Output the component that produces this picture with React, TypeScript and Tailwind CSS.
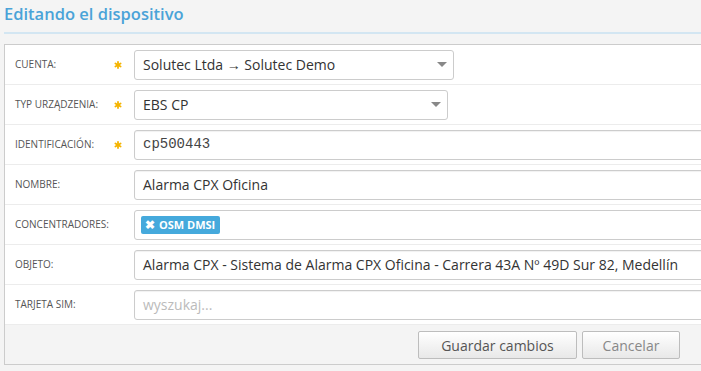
import { Asterisk } from 'lucide-react';

interface Field {
  label: string;
  required?: boolean;
  kind: 'select' | 'text' | 'mono' | 'tags' | 'placeholder';
  value: string;
  width?: string;
}

const fields: Field[] = [
  { label: 'Cuenta:', required: true, kind: 'select', value: 'Solutec Ltda → Solutec Demo', width: 'w-[320px]' },
  { label: 'Typ urządzenia:', required: true, kind: 'select', value: 'EBS CP', width: 'w-[314px]' },
  { label: 'Identificación:', required: true, kind: 'mono', value: 'cp500443' },
  { label: 'Nombre:', kind: 'text', value: 'Alarma CPX Oficina' },
  { label: 'Concentradores:', kind: 'tags', value: 'OSM DMSI' },
  { label: 'Objeto:', kind: 'text', value: 'Alarma CPX - Sistema de Alarma CPX Oficina - Carrera 43A Nº 49D Sur 82, Medellín' },
  { label: 'Tarjeta SIM:', kind: 'placeholder', value: 'wyszukaj...' },
];

function FieldInput({ field }: { field: Field }) {
  if (field.kind === 'select') {
    return (
      <div className={`${field.width} h-[30px] flex items-center justify-between border border-[#ccc] rounded-[3px] bg-white pl-[8px] pr-[6px]`}>
        <span className="text-[14px] text-[#333] whitespace-nowrap">{field.value}</span>
        <span className="w-0 h-0 border-l-[5px] border-r-[5px] border-t-[5px] border-l-transparent border-r-transparent border-t-[#888]" />
      </div>
    );
  }

  if (field.kind === 'tags') {
    return (
      <div className="flex-1 -mr-[6px] h-[30px] flex items-center border border-[#ccc] rounded-[3px] bg-white pl-[6px]">
        <span className="flex items-center gap-[4px] h-[18px] pl-[4px] pr-[5px] rounded-[2px] bg-[#45a9dc] text-white text-[11px] font-bold leading-none">
          <span className="text-[12px] leading-none">✖</span>
          {field.value}
        </span>
      </div>
    );
  }

  const textClass =
    field.kind === 'mono'
      ? "font-['Liberation_Mono',monospace] text-[14px] text-[#444]"
      : field.kind === 'placeholder'
        ? 'text-[14px] text-[#bbb]'
        : 'text-[14px] text-[#333]';

  return (
    <div className="flex-1 -mr-[6px] h-[30px] flex items-center border border-[#ccc] rounded-[3px] bg-white pl-[8px] shadow-[inset_0_1px_1px_rgba(0,0,0,0.06)]">
      <span className={`${textClass} whitespace-nowrap`}>{field.value}</span>
    </div>
  );
}

export default function App() {
  return (
    <div className="w-[701px] h-[371px] overflow-hidden bg-[#f4f4f4] font-['Open_Sans',sans-serif]">
      <div className="h-[34px] ml-[4px] border-b-2 border-[#d3e6f2]">
        <h1 className="pt-[3px] text-[16.5px] leading-[22px] font-semibold text-[#4aa3d8]">
          Editando el dispositivo
        </h1>
      </div>

      <div className="mt-[10px] ml-[4px] border-l border-t border-b border-[#cccccc] bg-white overflow-hidden">
        {fields.map((field) => (
          <div key={field.label} className="h-[40px] flex items-center border-b border-[#ececec] pl-[10px]">
            <div className="w-[97px] text-[10px] uppercase text-[#555] whitespace-nowrap">{field.label}</div>
            <div className="w-[12px] flex justify-center">
              {field.required && <Asterisk size={14} strokeWidth={3.6} className="text-[#f5b400]" />}
            </div>
            <div className="flex-1 flex ml-[10px]">
              <FieldInput field={field} />
            </div>
          </div>
        ))}

        <div className="h-[39px] bg-[#f4f4f4] flex justify-end items-start pt-[6px] pr-[21px] gap-[5px]">
          <button className="w-[159px] h-[28px] border border-[#bdbdbd] rounded-[2px] bg-gradient-to-b from-white to-[#e8e8e8] text-[14px] text-[#555]">
            Guardar cambios
          </button>
          <button className="w-[98px] h-[28px] border border-[#bdbdbd] rounded-[2px] bg-gradient-to-b from-white to-[#e8e8e8] text-[14px] text-[#888]">
            Cancelar
          </button>
        </div>
      </div>
    </div>
  );
}
